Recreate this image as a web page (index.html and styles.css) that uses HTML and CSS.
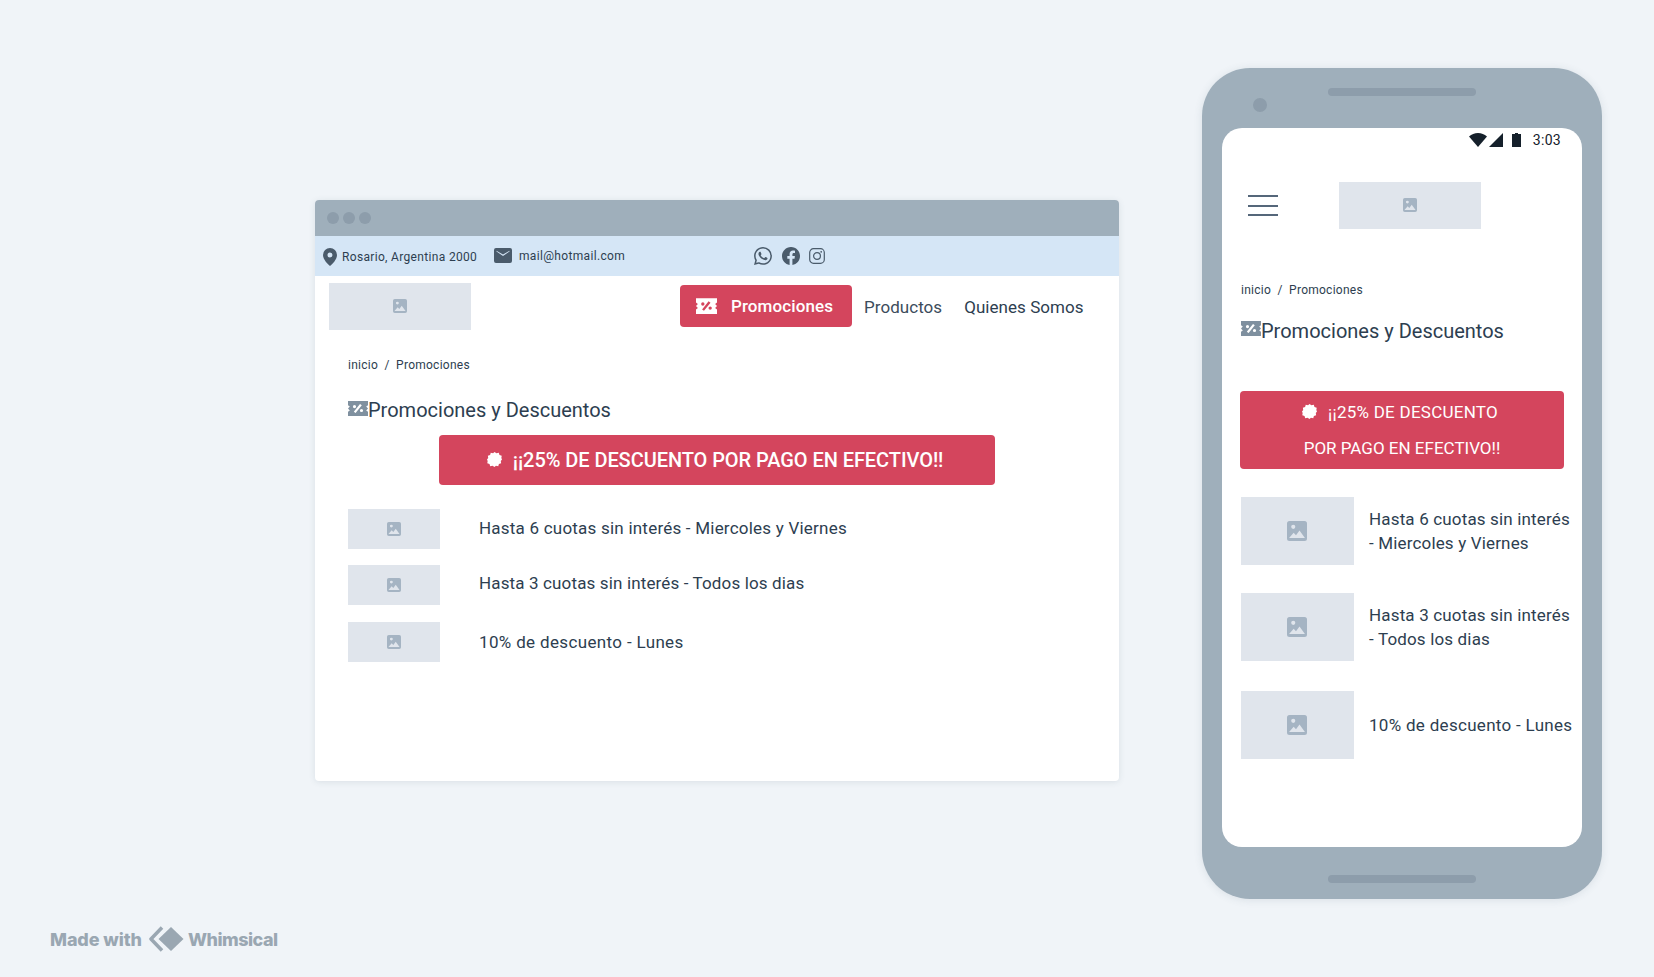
FILE: index.html
```html
<!DOCTYPE html>
<html lang="es">
<head>
<meta charset="utf-8">
<title>Promociones</title>
<link rel="stylesheet" href="styles.css">
</head>
<body>
<svg class="defs" aria-hidden="true">
  <symbol id="pic" viewBox="0 0 24 24"><path fill-rule="evenodd" d="M3 0h18a3 3 0 0 1 3 3v18a3 3 0 0 1-3 3H3a3 3 0 0 1-3-3V3a3 3 0 0 1 3-3zM7.500 4.500a2.500 2.500 0 1 0 0 5 2.500 2.500 0 0 0 0-5zM2.500 20.500h19l-6.500-9-4.200 5.500-2.800-2.800z"/></symbol>
  <symbol id="ticket" viewBox="0 0 20 15"><path fill-rule="evenodd" d="M0 0h20v4.200l-1.800 1.400 1.800 1.900-1.800 1.900 1.800 1.400V15H0v-4.200l1.800-1.400L0 7.500l1.800-1.900L0 4.200zM12 3l-6.200 7.800 1.800 1.300 6.200-7.800zM6.500 4a1.600 1.600 0 1 0 0 3.200 1.600 1.600 0 0 0 0-3.200zM13.500 7.900a1.600 1.600 0 1 0 0 3.200 1.600 1.600 0 0 0 0-3.200z"/></symbol>
  <symbol id="burst" viewBox="0 0 16 16"><path d="M8 0l2.100 1.300 2.500-.4.700 2.400 2.400.7-.4 2.500L16 8l-1.300 1.500.4 2.500-2.400.7-.7 2.400-2.500-.4L8 16l-2.100-1.300-2.500.4-.7-2.400-2.400-.7.4-2.500L0 8l1.300-1.500-.4-2.500 2.400-.7.7-2.400 2.500.4z"/></symbol>
</svg>

<section class="browser">
  <div class="chrome"><i class="dot"></i><i class="dot"></i><i class="dot"></i></div>
  <div class="topbar">
    <svg class="ico-pin" viewBox="0 0 14 18"><path fill-rule="evenodd" d="M7 0a7 7 0 0 1 7 7c0 4.500-5 9.500-7 11-2-1.500-7-6.500-7-11a7 7 0 0 1 7-7zM7 4.500a2.500 2.500 0 1 0 0 5 2.500 2.500 0 0 0 0-5z"/></svg>
    <span class="addr">Rosario, Argentina 2000</span>
    <svg class="ico-mail" viewBox="0 0 18 15"><path fill-rule="evenodd" d="M2 0h14a2 2 0 0 1 2 2v11a2 2 0 0 1-2 2H2a2 2 0 0 1-2-2V2a2 2 0 0 1 2-2zM2.500 3.500L9 8l6.500-4.500v-.800L9 6.500 2.500 2.700z"/></svg>
    <span class="mail">mail@hotmail.com</span>
    <div class="social">
      <svg class="ico-soc" viewBox="0 0 16 16"><path d="M13.601 2.326A7.854 7.854 0 0 0 7.994 0C3.627 0 .068 3.558.064 7.926c0 1.399.366 2.76 1.057 3.965L0 16l4.204-1.102a7.933 7.933 0 0 0 3.79.965h.004c4.368 0 7.926-3.558 7.93-7.93A7.898 7.898 0 0 0 13.6 2.326zM7.994 14.521a6.573 6.573 0 0 1-3.356-.92l-.24-.144-2.494.654.666-2.433-.156-.251a6.56 6.56 0 0 1-1.007-3.505c0-3.626 2.957-6.584 6.591-6.584a6.56 6.56 0 0 1 4.66 1.931 6.557 6.557 0 0 1 1.928 4.66c-.004 3.639-2.961 6.592-6.592 6.592zm3.615-4.934c-.197-.099-1.17-.578-1.353-.646-.182-.065-.315-.099-.445.099-.133.197-.513.646-.627.775-.114.133-.232.148-.43.05-.197-.1-.836-.308-1.592-.985-.59-.525-.985-1.175-1.103-1.372-.114-.198-.011-.304.088-.403.087-.088.197-.232.296-.346.1-.114.133-.198.198-.33.065-.134.034-.248-.015-.347-.05-.099-.445-1.076-.612-1.47-.16-.389-.323-.335-.445-.34-.114-.007-.247-.007-.38-.007a.729.729 0 0 0-.529.247c-.182.198-.691.677-.691 1.654 0 .977.71 1.916.81 2.049.098.133 1.394 2.132 3.383 2.992.47.205.84.326 1.129.418.475.152.904.129 1.246.08.38-.058 1.171-.48 1.338-.943.164-.464.164-.86.114-.943-.049-.084-.182-.133-.38-.232z"/></svg>
      <svg class="ico-soc" viewBox="0 0 16 16"><path d="M16 8.049c0-4.446-3.582-8.05-8-8.05C3.58 0-.002 3.603-.002 8.05c0 4.017 2.926 7.347 6.75 7.951v-5.625h-2.03V8.05H6.750V6.275c0-2.017 1.195-3.131 3.022-3.131.876 0 1.791.157 1.791.157v1.98h-1.009c-.993 0-1.303.621-1.303 1.258v1.510h2.218l-.354 2.326H9.250V16c3.824-.604 6.750-3.934 6.750-7.951z"/></svg>
      <svg class="ico-ig" viewBox="0 0 16 16"><rect class="ig-line" x=".7" y=".7" width="14.600" height="14.600" rx="3.800"/><circle class="ig-line" cx="8" cy="8" r="3.400"/><circle cx="12.200" cy="3.800" r=".9"/></svg>
    </div>
  </div>

  <div class="nav">
    <div class="logo"><svg class="pic-s"><use href="#pic"/></svg></div>
    <a class="promo"><svg class="ticket-w"><use href="#ticket"/></svg>Promociones</a>
    <a class="navlink navlink-a">Productos</a>
    <a class="navlink navlink-b">Quienes Somos</a>
  </div>

  <div class="main">
    <p class="crumb">inicio&nbsp; /&nbsp; Promociones</p>
    <h1 class="title"><svg class="ticket-g"><use href="#ticket"/></svg>Promociones y Descuentos</h1>
    <div class="banner"><svg class="burst"><use href="#burst"/></svg>¡¡25% DE DESCUENTO POR PAGO EN EFECTIVO!!</div>
    <div class="row row-1"><div class="thumb"><svg class="pic-s"><use href="#pic"/></svg></div><p class="row-text">Hasta 6 cuotas sin interés - Miercoles y Viernes</p></div>
    <div class="row row-2"><div class="thumb"><svg class="pic-s"><use href="#pic"/></svg></div><p class="row-text">Hasta 3 cuotas sin interés - Todos los dias</p></div>
    <div class="row row-3"><div class="thumb"><svg class="pic-s"><use href="#pic"/></svg></div><p class="row-text">10% de descuento - Lunes</p></div>
  </div>
</section>

<section class="phone">
  <div class="speaker speaker-top"></div>
  <i class="camera"></i>
  <div class="screen">
    <div class="status">
      <svg class="ico-wifi" viewBox="0 0 18 14"><path d="M9 14L0 3.500C2.500 1.300 5.600 0 9 0s6.500 1.300 9 3.500z"/></svg>
      <svg class="ico-signal" viewBox="0 0 14 14"><path d="M14 0v14H0z"/></svg>
      <svg class="ico-batt" viewBox="0 0 9 14"><path d="M3 0h3v1h3v13H0V1h3z"/></svg>
      <span class="clock">3:03</span>
    </div>
    <div class="m-header">
      <div class="burger"><i></i><i></i><i></i></div>
      <div class="logo m-logo"><svg class="pic-s"><use href="#pic"/></svg></div>
    </div>
    <div class="m-main">
      <p class="crumb m-crumb">inicio&nbsp; /&nbsp; Promociones</p>
      <h1 class="title m-title"><svg class="ticket-g"><use href="#ticket"/></svg>Promociones y Descuentos</h1>
      <div class="m-banner">
        <p class="m-line m-line-1"><svg class="burst"><use href="#burst"/></svg>¡¡25% DE DESCUENTO</p>
        <p class="m-line">POR PAGO EN EFECTIVO!!</p>
      </div>
      <div class="m-row m-row-1"><div class="m-thumb"><svg class="pic-l"><use href="#pic"/></svg></div><p class="m-text">Hasta 6 cuotas sin interés - Miercoles y Viernes</p></div>
      <div class="m-row m-row-2"><div class="m-thumb"><svg class="pic-l"><use href="#pic"/></svg></div><p class="m-text">Hasta 3 cuotas sin interés - Todos los dias</p></div>
      <div class="m-row m-row-3"><div class="m-thumb"><svg class="pic-l"><use href="#pic"/></svg></div><p class="m-text m-text-last">10% de descuento - Lunes</p></div>
    </div>
  </div>
  <div class="speaker speaker-bottom"></div>
</section>

<footer class="made">
  <span class="made-a">Made with</span>
  <svg class="wh-logo" viewBox="0 0 36 26"><path class="wh-chev" d="M13 1.500L2 13l11 11.500"/><path class="wh-dia" d="M22 1L34.500 13 22 25 9.500 13z"/></svg>
  <span class="made-b">Whimsical</span>
</footer>
</body>
</html>
```

FILE: styles.css
```css
* { box-sizing: border-box; }
html, body { margin: 0; padding: 0; }
body {
  width: 1654px;
  height: 977px;
  background: #f0f4f8;
  font-family: Roboto, "Liberation Sans", sans-serif;
  color: #2d3e50;
  overflow: hidden;
  position: relative;
}
p, h1 { margin: 0; font-weight: 400; }
i { display: block; }
.defs { position: absolute; width: 0; height: 0; }

/* desktop window */
.browser {
  position: absolute;
  left: 315px;
  top: 200px;
  width: 804px;
  height: 581px;
  background: #fff;
  border-radius: 4px;
  box-shadow: 0 1px 6px rgba(60, 80, 100, .12);
  overflow: hidden;
}
.chrome {
  height: 36px;
  background: #9fafbb;
  display: flex;
  align-items: center;
  gap: 4px;
  padding-left: 12px;
}
.dot { width: 12px; height: 12px; border-radius: 50%; background: #8d9dab; }
.topbar {
  height: 40px;
  background: #d5e6f6;
  display: flex;
  align-items: center;
  font-size: 12px;
  letter-spacing: .33px;
  color: #2d3e50;
}
.ico-pin { width: 14px; height: 18px; margin: 2px 0 0 8px; fill: #4a5b6b; }
.addr { margin: 2px 0 0 5px; width: 136px; white-space: nowrap; }
.ico-mail { width: 18px; height: 15px; margin: -2px 0 0 16px; fill: #4a5b6b; }
.mail { margin: -1px 0 0 7px; width: 235px; white-space: nowrap; }
.social { display: flex; align-items: center; margin-top: -1px; }
.ico-soc { width: 18px; height: 18px; fill: #4a5b6b; margin-right: 10px; }
.ico-ig { width: 16px; height: 16px; fill: #4a5b6b; margin-left: -1px; }
.ig-line { fill: none; stroke: #4a5b6b; stroke-width: 1.2; }

.nav { display: flex; align-items: center; padding: 7px 0 0 14px; }
.logo {
  width: 142px;
  height: 47px;
  background: #e0e5ec;
  display: flex;
  align-items: center;
  justify-content: center;
}
.logo .pic-s { margin-top: -2px; }
.pic-s { width: 14px; height: 14px; fill: #a5b4c3; display: block; }
.pic-l { width: 20px; height: 20px; fill: #a5b4c3; display: block; margin-left: -2px; }
.promo {
  width: 172px;
  height: 42px;
  margin: -2px 0 0 209px;
  background: #d4455d;
  border-radius: 4px;
  color: #fff;
  font-size: 17px;
  font-weight: 500;
  display: flex;
  align-items: center;
  padding-left: 16px;
  letter-spacing: .1px;
}
.ticket-w { width: 21px; height: 16px; fill: #fff; margin-right: 14px; margin-top: 1px; }
.navlink { font-size: 17px; color: #3c4c5c; white-space: nowrap; letter-spacing: .05px; }
.navlink-a { margin-left: 12px; }
.navlink-b { margin-left: 22px; color: #2d3e50; }

.main { padding: 27px 0 0 33px; }
.crumb { font-size: 12px; line-height: 16px; color: #2d3e50; letter-spacing: .25px; }
.title {
  font-size: 20px;
  line-height: 28px;
  margin-top: 23px;
  display: flex;
  align-items: center;
  color: #2d3e50;
}
.ticket-g { width: 20px; height: 15px; fill: #7f909f; margin-top: -4px; }
.banner {
  width: 556px;
  height: 49.500px;
  margin: 11px 0 0 91px;
  padding-top: 1px;
  background: #d4455d;
  border-radius: 4px;
  color: #fff;
  font-size: 20px;
  font-weight: 500;
  letter-spacing: -.07px;
  display: flex;
  align-items: center;
  justify-content: center;
  white-space: nowrap;
}
.burst { width: 15px; height: 15px; fill: #fff; margin-right: 10px; flex: none; }
.banner .burst { margin: -2px 11px 0 -4px; }
.row { display: flex; align-items: center; height: 40px; }
.row-1 { margin-top: 24.500px; }
.row-2 { margin-top: 16px; }
.row-3 { margin-top: 17px; }
.thumb {
  width: 92px;
  height: 40px;
  background: #e0e5ec;
  display: flex;
  align-items: center;
  justify-content: center;
}
.row-text { margin-left: 39px; font-size: 17px; color: #2d3e50; white-space: nowrap; letter-spacing: .22px; }
.row-1 .row-text { margin-bottom: 1.500px; }
.row-2 .row-text { margin-bottom: 4px; letter-spacing: .14px; }
.row-3 .row-text { letter-spacing: .35px; }

/* phone */
.phone {
  position: absolute;
  left: 1202px;
  top: 68px;
  width: 400px;
  height: 831px;
  background: #9fafbb;
  border-radius: 48px;
  box-shadow: 0 1px 8px rgba(60, 80, 100, .12);
  padding-top: 20px;
  display: flex;
  flex-direction: column;
  align-items: center;
}
.speaker { width: 148px; height: 8px; border-radius: 4px; background: #8d9dab; flex: none; }
.camera {
  position: absolute;
  left: 51px;
  top: 30px;
  width: 14px;
  height: 14px;
  border-radius: 50%;
  background: #8d9dab;
}
.screen {
  width: 360px;
  height: 719px;
  margin-top: 32px;
  background: #fff;
  border-radius: 20px;
  overflow: hidden;
  flex: none;
}
.speaker-bottom { margin-top: 28px; }
.status {
  height: 24px;
  display: flex;
  align-items: center;
  padding-right: 21px;
  justify-content: flex-end;
  color: #15202b;
}
.ico-wifi { width: 18px; height: 14px; fill: #15202b; }
.ico-signal { width: 14px; height: 14px; fill: #15202b; margin-left: 2px; }
.ico-batt { width: 9px; height: 14px; fill: #15202b; margin-left: 9px; }
.clock { font-size: 14px; margin-left: 12px; letter-spacing: .3px; }
.m-header { display: flex; align-items: center; margin-top: 30px; height: 47px; }
.burger { width: 30px; margin-left: 26px; display: flex; flex-direction: column; gap: 7.500px; }
.burger i { height: 2px; background: #55677a; }
.m-logo { margin-left: 61px; }
.m-main { padding: 52.500px 0 0 19px; }
.m-title { margin-top: 19px; }
.m-banner {
  width: 324px;
  height: 78px;
  margin: 46.500px 0 0 -1px;
  padding-top: 3px;
  background: #d4455d;
  border-radius: 4px;
  color: #fff;
  font-size: 17px;
  font-weight: 500;
  text-align: center;
}
.m-line { line-height: 36px; display: flex; align-items: center; justify-content: center; white-space: nowrap; }
.m-line-1 { padding-right: 4px; letter-spacing: .25px; }
.m-line-1 .burst { margin: -2px 11px 0 0; }
.m-row { display: flex; align-items: center; height: 68px; }
.m-row-1 { margin-top: 28px; }
.m-row-2 { margin-top: 28px; }
.m-row-3 { margin-top: 30px; }
.m-thumb {
  width: 113px;
  height: 68px;
  flex: none;
  background: #e0e5ec;
  display: flex;
  align-items: center;
  justify-content: center;
}
.m-text { margin-left: 15px; width: 206px; font-size: 17px; line-height: 24px; color: #2d3e50; letter-spacing: .16px; }
.m-text-last { letter-spacing: .3px; }

/* watermark */
.made {
  position: absolute;
  left: 50px;
  top: 926px;
  height: 26px;
  display: flex;
  align-items: center;
  font-family: Inter, "Liberation Sans", sans-serif;
  font-size: 18px;
  font-weight: 800;
  color: #9aa7b2;
}
.made-a { letter-spacing: -.1px; }
.made-b { letter-spacing: -.5px; }
.wh-logo { width: 36px; height: 26px; margin: 0 3px 0 7px; }
.wh-chev { fill: none; stroke: #9aa7b2; stroke-width: 3.500; stroke-linejoin: round; }
.wh-dia { fill: #9aa7b2; }
```
